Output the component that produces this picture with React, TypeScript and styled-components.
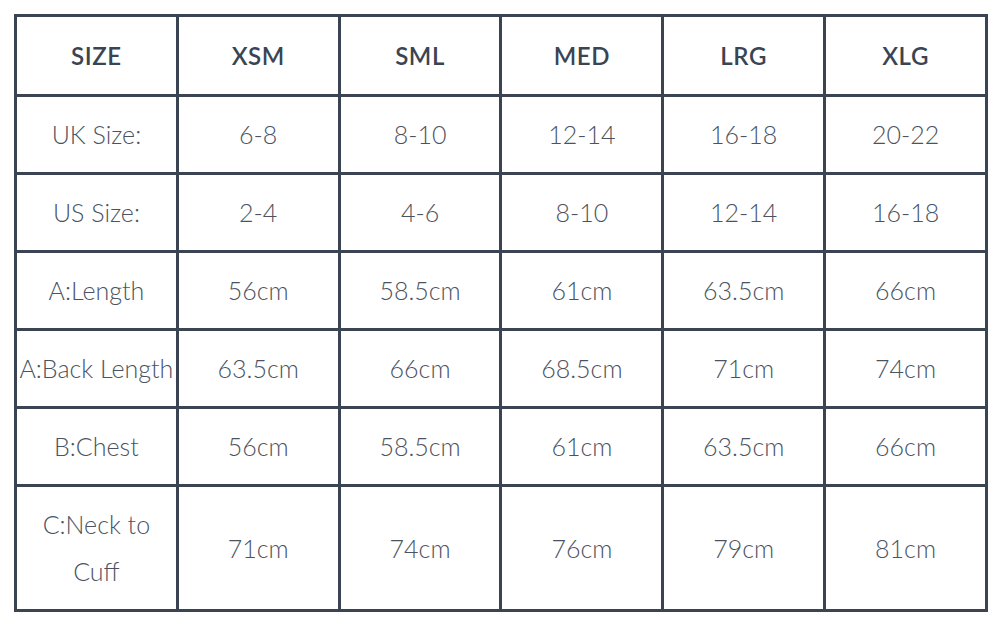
import React from 'react';
import styled, { createGlobalStyle } from 'styled-components';

const GlobalStyle = createGlobalStyle`
  body {
    margin: 0;
    background: #fff;
    font-family: Lato, 'Open Sans', sans-serif;
  }
`;

const Wrap = styled.div`
  padding: 14px 0 0 14px;
`;

const Table = styled.table`
  width: 974px;
  border-collapse: collapse;
  table-layout: fixed;
  border: 3px solid #3a4453;
`;

const Row = styled.tr<{ h: number }>`
  height: ${(p) => p.h}px;
`;

const Head = styled.th`
  border: 3px solid #3a4453;
  font-weight: 600;
  font-size: 24px;
  letter-spacing: 0.6px;
  color: #3a4453;
  text-align: center;
  padding: 0;
`;

const Cell = styled.td`
  border: 3px solid #3a4453;
  font-weight: 300;
  font-size: 25px;
  line-height: 47px;
  color: #4b5361;
  text-align: center;
  padding: 0;
  white-space: pre-line;
`;

const headers = ['SIZE', 'XSM', 'SML', 'MED', 'LRG', 'XLG'];

const rows: { h: number; cells: string[] }[] = [
  { h: 78, cells: ['UK Size:', '6-8', '8-10', '12-14', '16-18', '20-22'] },
  { h: 78, cells: ['US Size:', '2-4', '4-6', '8-10', '12-14', '16-18'] },
  { h: 78, cells: ['A:Length', '56cm', '58.5cm', '61cm', '63.5cm', '66cm'] },
  { h: 78, cells: ['A:Back Length', '63.5cm', '66cm', '68.5cm', '71cm', '74cm'] },
  { h: 78, cells: ['B:Chest', '56cm', '58.5cm', '61cm', '63.5cm', '66cm'] },
  { h: 125, cells: ['C:Neck to\nCuff', '71cm', '74cm', '76cm', '79cm', '81cm'] },
];

const App: React.FC = () => {
  return (
    <Wrap>
      <GlobalStyle />
      <Table>
        <thead>
          <Row h={80}>
            {headers.map((h) => (
              <Head key={h}>{h}</Head>
            ))}
          </Row>
        </thead>
        <tbody>
          {rows.map((r, i) => (
            <Row h={r.h} key={i}>
              {r.cells.map((c, j) => (
                <Cell key={j}>{c}</Cell>
              ))}
            </Row>
          ))}
        </tbody>
      </Table>
    </Wrap>
  );
};

export default App;
